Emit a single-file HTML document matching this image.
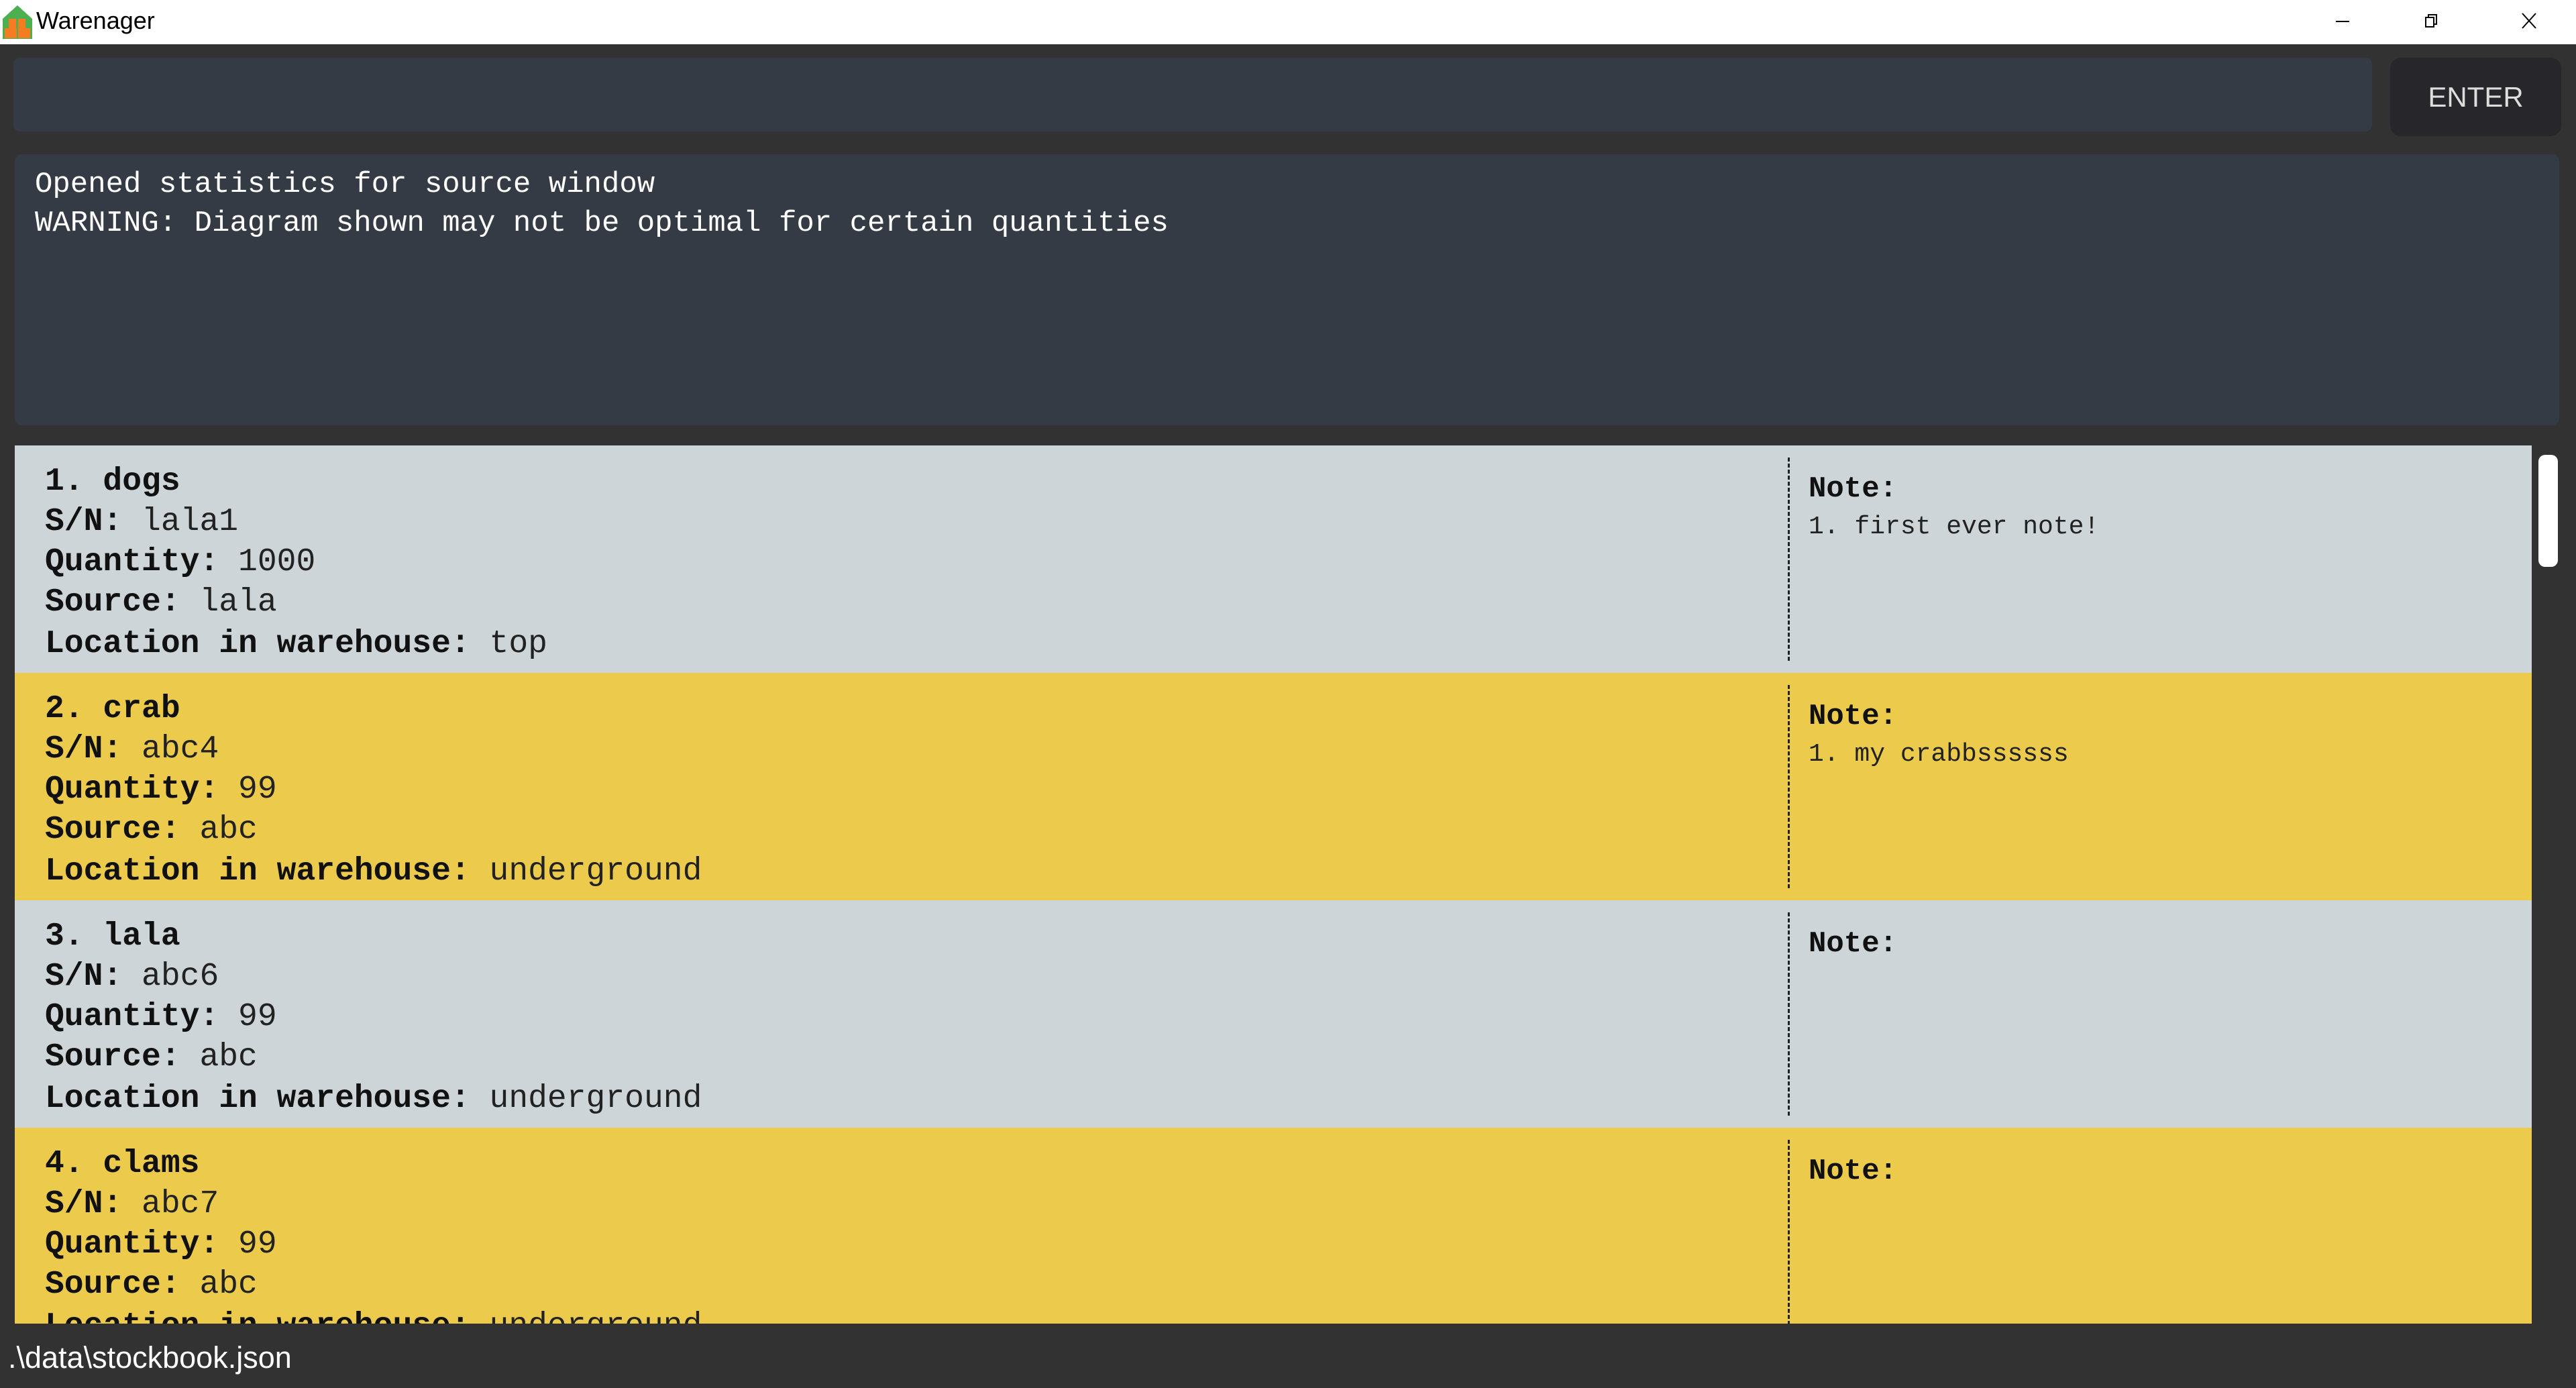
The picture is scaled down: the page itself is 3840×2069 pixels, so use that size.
<!DOCTYPE html>
<html><head><meta charset="utf-8"><style>
*{margin:0;padding:0;box-sizing:border-box}
body{width:3840px;height:2069px;background:#323232;position:relative;overflow:hidden;font-family:"Liberation Mono",monospace}
.abs{position:absolute}
.title{left:0;top:0;width:3840px;height:66px;background:#fff}
.cmd{left:20px;top:86px;width:3516px;height:110px;background:#353b44;border-radius:10px}
.enter{left:3563px;top:86px;width:255px;height:117px;background:#27272b;border-radius:16px;color:#ddd;font-family:"Liberation Sans",sans-serif;font-size:42px;text-align:center;line-height:117px}
.res{left:22px;top:230px;width:3793px;height:404px;background:#353b44;border-radius:10px;color:#fff;font-size:44px;padding:16px 0 0 30px;line-height:58px;white-space:pre}
.list{left:22px;top:664px;width:3752px;height:1309px;overflow:hidden}
.card{position:relative;height:339px;width:3752px}
.g{background:#cdd5d8}.y{background:#eccb4c}
.ln{position:absolute;left:45px;font-size:48px;color:#111;white-space:pre;line-height:1}
.ln b{font-weight:bold}.ln span{font-weight:normal;color:#222}
.div{position:absolute;left:2643px;top:18px;bottom:18px;border-left:3px dashed #222}
.note{position:absolute;left:2674px;top:40px;font-size:44px;font-weight:bold;color:#111}
.nl{position:absolute;left:2674px;top:100px;font-size:38px;color:#222;white-space:pre}
.sb{left:3784px;top:678px;width:29px;height:167px;background:#fff;border-radius:10px}
.status{left:12px;top:1998px;color:#fff;font-family:"Liberation Sans",sans-serif;font-size:45px}
</style></head><body>
<div class="abs title">
<svg class="abs" style="left:3px;top:6px" width="46" height="52" viewBox="0 0 46 52"><polygon points="23,2 45,22 45,52 1,52 1,22" fill="#4caf50"/><rect x="10" y="22" width="11" height="14" fill="#f57c20"/><rect x="24" y="22" width="11" height="14" fill="#f57c20"/><rect x="4" y="36" width="18" height="15" fill="#f57c20"/><rect x="24" y="36" width="18" height="15" fill="#f57c20"/></svg>
<div class="abs" style="left:54px;top:10px;font-family:'Liberation Sans',sans-serif;font-size:36px;color:#000">Warenager</div>
<svg class="abs" style="left:3470px;top:14px" width="300" height="40" viewBox="0 0 300 40"><line x1="12" y1="18" x2="32" y2="18" stroke="#000" stroke-width="2"/><rect x="146" y="12" width="12" height="14" fill="none" stroke="#000" stroke-width="2"/><polyline points="150,12 150,8 162,8 162,22 158,22" fill="none" stroke="#000" stroke-width="2"/></svg>
<svg class="abs" style="left:3750px;top:14px" width="40" height="40" viewBox="0 0 40 40"><line x1="10" y1="6" x2="30" y2="28" stroke="#000" stroke-width="2"/><line x1="30" y1="6" x2="10" y2="28" stroke="#000" stroke-width="2"/></svg>
</div>
<div class="abs cmd"></div>
<div class="abs enter">ENTER</div>
<div class="abs res">Opened statistics for source window
WARNING: Diagram shown may not be optimal for certain quantities</div>
<div class="abs list">
<div class="card g">
<div class="ln" style="top:30px"><b>1. dogs</b></div>
<div class="ln" style="top:90px"><b>S/N: </b><span>lala1</span></div>
<div class="ln" style="top:150px"><b>Quantity: </b><span>1000</span></div>
<div class="ln" style="top:210px"><b>Source: </b><span>lala</span></div>
<div class="ln" style="top:272px"><b>Location in warehouse: </b><span>top</span></div>
<div class="div"></div><div class="note">Note:</div><div class="nl">1. first ever note!</div>
</div>
<div class="card y">
<div class="ln" style="top:30px"><b>2. crab</b></div>
<div class="ln" style="top:90px"><b>S/N: </b><span>abc4</span></div>
<div class="ln" style="top:150px"><b>Quantity: </b><span>99</span></div>
<div class="ln" style="top:210px"><b>Source: </b><span>abc</span></div>
<div class="ln" style="top:272px"><b>Location in warehouse: </b><span>underground</span></div>
<div class="div"></div><div class="note">Note:</div><div class="nl">1. my crabbssssss</div>
</div>
<div class="card g">
<div class="ln" style="top:30px"><b>3. lala</b></div>
<div class="ln" style="top:90px"><b>S/N: </b><span>abc6</span></div>
<div class="ln" style="top:150px"><b>Quantity: </b><span>99</span></div>
<div class="ln" style="top:210px"><b>Source: </b><span>abc</span></div>
<div class="ln" style="top:272px"><b>Location in warehouse: </b><span>underground</span></div>
<div class="div"></div><div class="note">Note:</div>
</div>
<div class="card y">
<div class="ln" style="top:30px"><b>4. clams</b></div>
<div class="ln" style="top:90px"><b>S/N: </b><span>abc7</span></div>
<div class="ln" style="top:150px"><b>Quantity: </b><span>99</span></div>
<div class="ln" style="top:210px"><b>Source: </b><span>abc</span></div>
<div class="ln" style="top:272px"><b>Location in warehouse: </b><span>underground</span></div>
<div class="div"></div><div class="note">Note:</div>
</div>
</div>
<div class="abs sb"></div>
<div class="abs status">.\data\stockbook.json</div>
</body></html>
